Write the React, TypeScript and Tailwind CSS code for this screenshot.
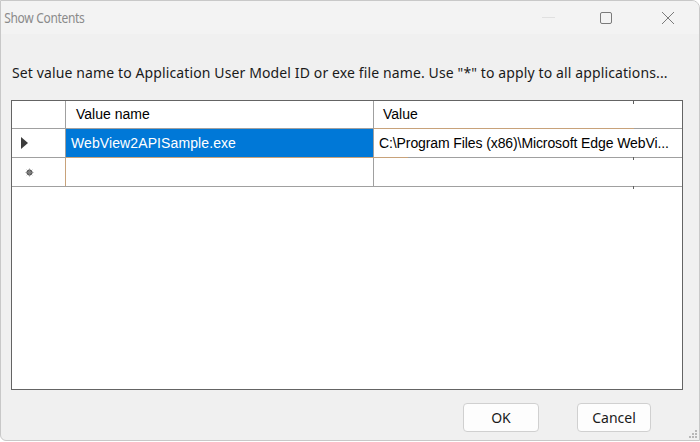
import React from "react";

const ui = { fontFamily: '"Noto Sans", "Open Sans", sans-serif' };
const grid = { fontFamily: '"Liberation Sans", Arial, sans-serif' };

function Tick({ top }: { top: string }) {
  return <div className={`absolute left-[621px] w-px h-[3px] bg-[#606060] ${top}`} />;
}

export default function App() {
  return (
    <div className="w-[700px] h-[442px] bg-white">
      <div className="w-[700px] h-[441px] bg-[#f0f0f0] border border-[#c8c8c8] rounded-tr-[8px] rounded-bl-[6px] flex flex-col overflow-hidden relative">
        {/* title bar */}
        <div className="h-[33px] shrink-0 bg-[#f3f3f3] flex items-center">
          <span
            className="pl-[4px] inline-block text-[15px] text-[#8a8a8a] tracking-[-0.4px] scale-x-[0.8] origin-left"
            style={ui}
          >
            Show Contents
          </span>
          <div className="ml-auto flex items-center h-full">
            <div className="w-[46px] h-full flex items-center justify-center mr-[12px]">
              <div className="w-[13px] h-px bg-[#e0e0e0]" />
            </div>
            <div className="w-[46px] h-full flex items-center justify-center mr-[16px]">
              <div className="w-[12px] h-[12px] border border-[#7a7a7a] rounded-[2px]" />
            </div>
            <div className="w-[46px] h-full flex items-center justify-center mr-[8px]">
              <svg width="14" height="14" viewBox="0 0 14 14">
                <path d="M1 1L13 13M13 1L1 13" stroke="#7a7a7a" strokeWidth="1" />
              </svg>
            </div>
          </div>
        </div>

        {/* label */}
        <div
          className="mt-[28px] h-[20px] flex items-center pl-[11px] text-[14px] text-[#1a1a1a] tracking-[0.12px] whitespace-nowrap"
          style={ui}
        >
          Set value name to Application User Model ID or exe file name. Use "*" to apply to all applications...
        </div>

        {/* grid */}
        <div
          className="mt-[18px] ml-[10px] w-[672px] h-[290px] border border-[#646464] bg-white flex flex-col text-[14px] text-black relative"
          style={grid}
        >
          {/* header */}
          <div className="h-[28px] flex border-b border-[#a0a0a0]">
            <div className="w-[54px] border-r border-[#a0a0a0]" />
            <div className="w-[308px] border-r border-[#a0a0a0] flex items-center pl-[10px]">Value name</div>
            <div className="flex-1 flex items-center pl-[9px]">Value</div>
          </div>
          {/* row 1 */}
          <div className="h-[29px] flex border-b border-[#a0a0a0]">
            <div className="w-[54px] border-r border-[#a0a0a0] flex items-center pl-[9px]">
              <svg width="7" height="12" viewBox="0 0 7 12">
                <path d="M0 0L7 6L0 12Z" fill="#3c3c3c" />
              </svg>
            </div>
            <div className="w-[308px] border-r border-[#a0a0a0] bg-[#0078d7] text-white flex items-center pl-[5px] tracking-[0.1px]">
              WebView2APISample.exe
            </div>
            <div className="flex-1 flex items-center pl-[5px] relative tracking-[-0.1px]">
              C:\Program Files (x86)\Microsoft Edge WebVi...
              <div className="absolute left-0 top-[-1px] w-[260px] h-px bg-[#c8a27a]" />
            </div>
          </div>
          {/* row 2 */}
          <div className="h-[29px] flex border-b border-[#a0a0a0] relative">
            <div className="w-[54px] border-r border-[#c8a27a] flex items-center pl-[13px]">
              <svg width="9" height="9" viewBox="0 0 9 9">
                <circle cx="4.5" cy="4.5" r="3" fill="#555" />
                <path d="M4.5 0.5V8.5M0.5 4.5H8.5M1.7 1.7L7.3 7.3M7.3 1.7L1.7 7.3" stroke="#888" strokeWidth="0.8" />
              </svg>
            </div>
            <div className="w-[308px] border-r border-[#a0a0a0]" />
            <div className="flex-1" />
            <div className="absolute left-[54px] top-[-1px] w-[342px] h-px bg-[#c8a27a]" />
          </div>
          <div className="flex-1" />
          <Tick top="top-0" />
          <Tick top="top-[56px]" />
          <Tick top="top-[85px]" />
        </div>

        {/* buttons */}
        <div className="mt-[13px] flex justify-end pr-[48px] gap-[38px]" style={ui}>
          <button className="w-[76px] h-[29px] bg-[#fdfdfd] border border-[#d0d0d0] rounded-[4px] text-[14px] text-[#1a1a1a]">
            OK
          </button>
          <button className="w-[74px] h-[29px] bg-[#fdfdfd] border border-[#d0d0d0] rounded-[4px] text-[14px] text-[#1a1a1a]">
            Cancel
          </button>
        </div>

        {/* size grip */}
        <svg className="absolute right-[2px] bottom-[2px]" width="9" height="9" viewBox="0 0 9 9">
          <g fill="#b8b8b8">
            <rect x="7" y="1" width="2" height="2" />
            <rect x="4" y="4" width="2" height="2" />
            <rect x="7" y="4" width="2" height="2" />
            <rect x="1" y="7" width="2" height="2" />
            <rect x="4" y="7" width="2" height="2" />
            <rect x="7" y="7" width="2" height="2" />
          </g>
        </svg>
      </div>
    </div>
  );
}
